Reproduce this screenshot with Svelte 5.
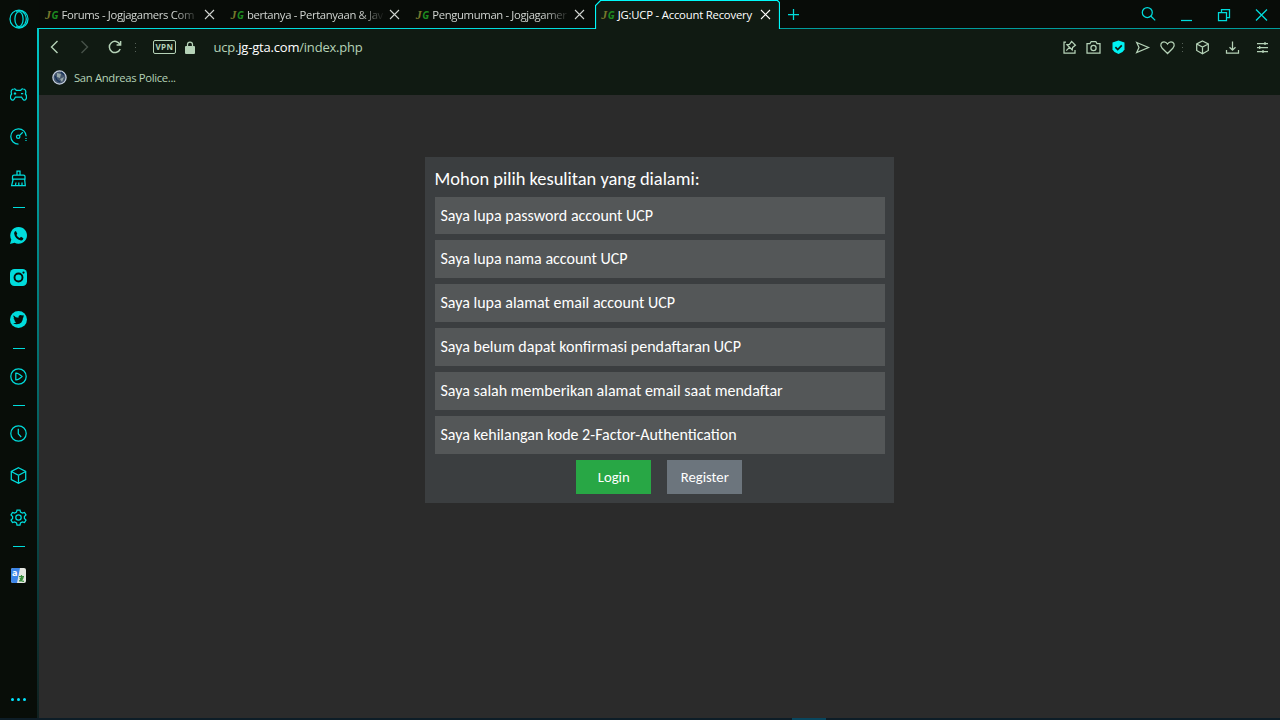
<script>
  const tabs = [
    { title: "Forums - Jogjagamers Com", active: false },
    { title: "bertanya - Pertanyaan & Jav", active: false },
    { title: "Pengumuman - Jogjagamer", active: false },
    { title: "JG:UCP - Account Recovery", active: true },
  ];

  const cube =
    '<path d="M8.5 .7 15.7 4.5V12.5L8.5 16.3 1.3 12.5V4.5ZM1.3 4.5 8.5 8.3 15.7 4.5M8.5 8.3V16.3"/>';

  const sidebar = [
    '<path d="M4 2.8Q5.6 2.6 6.2 4.3H10.8Q11.4 2.6 13 2.8C15 2.8 16.6 5 15.4 8 16.6 9.5 16.6 12 15.9 13.2 14.8 15 12.8 14 12.4 12.4L11.5 11H5.5L4.6 12.4C4.2 14 2.2 15 1.1 13.2.4 12 .4 9.5 1.6 8 .4 5 2 2.8 4 2.8Z"/><path d="M5 6.3V8.7M3.8 7.5H6.2M11 7.5H13.2"/>',
    '<path d="M8.5 16.2A7.7 7.7 0 1 1 16.2 8.2M9.4 7.6 12.8 4.2"/><circle cx="8.2" cy="8.7" r="1.7"/><path d="M16 10v1M16 12v1" />',
    '<path d="M7 5V1.2H10V5M4 5.2H13.5Q15 5.2 15 6.5V9H2.5V6.5Q2.5 5.2 4 5.2ZM3.2 9 1.6 15.7H15.3L14.6 9M5.4 15.5 6 12.5M8.8 15.5V12.5M12 15.5V12.5"/>',
    "-",
    '<g stroke="none" fill="currentColor"><path d="M8.6 0A8.4 8.4 0 1 1 4.6 15.8L0 17 1.3 12.5A8.4 8.4 0 0 1 8.6 0Z"/><path fill="#080d08" d="M5.9 3.9 7.3 6.7 6.5 7.9Q7.7 10.2 9.8 11L11 9.8 13.4 11.2Q13 13.7 10.9 13.4 4.9 12.1 4.1 6.3 4.2 4.2 5.9 3.9Z"/></g>',
    '<rect x="0" y="0" width="17" height="17" rx="4.5" stroke="none" fill="currentColor"/><circle cx="8.5" cy="8.5" r="4" stroke="#080d08" stroke-width="1.9"/><circle cx="13.5" cy="3.6" r="1.1" stroke="none" fill="#080d08"/>',
    '<circle cx="8.5" cy="8.5" r="8.5" stroke="none" fill="currentColor"/><path stroke="none" fill="#080d08" d="M3.5 4.2Q5.6 6.8 8.5 6.8 8.2 3.9 10.8 3.9L12.1 4.5 13.8 4 13.1 5.4 14.2 5.4 13 6.8Q12.8 13 6.8 13.2 4.8 13.2 3.1 12.2 5.2 12.2 6.3 11.2 4.6 10.8 4.2 9.5H5.2Q3.6 8.6 3.5 7.1L4.4 7.4Q2.9 5.8 3.5 4.2Z"/>',
    "-",
    '<circle cx="8.5" cy="8.5" r="7.7"/><path d="M5.8 5.2V11.8Q8 12.2 12 8.5 8 4.8 5.8 5.2Z"/>',
    "-",
    '<circle cx="8.5" cy="8.5" r="7.7"/><path d="M8.3 3.8V8.8L11.2 12"/>',
    cube,
    '<path d="M7 1H10L10.5 3.1 12.4 4.1 14.5 3.4 16 6 14.4 7.5V9.5L16 11 14.5 13.6 12.4 12.9 10.5 13.9 10 16H7L6.5 13.9 4.6 12.9 2.5 13.6 1 11 2.6 9.5V7.5L1 6 2.5 3.4 4.6 4.1 6.5 3.1Z"/><circle cx="8.5" cy="8.5" r="2.7"/>',
    "-",
  ];

  const tools = [
    '<path d="M5 3H3V14H14V11M10.6 2.4 14.4 6.2 11.6 8.4 11.2 11 5.9 5.7 8.5 5.3ZM8.4 8.4 5.3 11.6"/>',
    '<path d="M2 4.5H5L6.2 2.5H10.8L12 4.5H15V14H2Z"/><circle cx="8.5" cy="9" r="2.6"/>',
    '<path fill="#00f3f3" stroke="none" d="M8.5 1.5 14.5 3.5V10.5L12.5 13 8.5 15 4.5 13 2.5 10.5V3.5Z"/><path stroke="#101a12" stroke-width="1.7" d="M5.4 8.2 7.7 10.5 11.8 6.3"/>',
    '<path d="M2.7 3.5 14.5 8.5 2.7 13.5 5 8.5Z"/>',
    '<path d="M8.5 14.5 3.2 9.3C.2 6 2.5 2.8 5 2.8Q7.2 2.8 8.5 5 9.8 2.8 12 2.8C14.5 2.8 16.8 6 13.8 9.3Z"/>',
  ];

  const menus = [
    '<path d="M8.5 2 14.3 5V11.5L8.5 14.8 2.7 11.5V5ZM2.7 5 8.5 8 14.3 5M8.5 8V14.8"/>',
    '<path d="M8.5 2.5V11M5.5 8.2 8.5 11.2 11.5 8.2M2.5 11V14H14.5V11"/>',
    '<path d="M3 4.5H14M3 8.5H14M3 12.5H14M11 3V6M5.7 7V10M9 11V14"/>',
  ];

  const windowButtons = [
    '<circle cx="7.3" cy="6.5" r="5"/><path d="M11 10.2 15.2 14.4"/>',
    '<path d="M3 14.5H14"/>',
    '<path d="M3.5 6.5H11.5V14.5H3.5ZM6.5 6.5V3.5H14.5V11.5H11.5"/>',
    '<path d="M3 3.5 14 14.5M14 3.5 3 14.5"/>',
  ];

  const problems = [
    "Saya lupa password account UCP",
    "Saya lupa nama account UCP",
    "Saya lupa alamat email account UCP",
    "Saya belum dapat konfirmasi pendaftaran UCP",
    "Saya salah memberikan alamat email saat mendaftar",
    "Saya kehilangan kode 2-Factor-Authentication",
  ];
</script>

{#snippet icon(body)}
  <svg class="icon" viewBox="0 0 17 17">{@html body}</svg>
{/snippet}

<div class="window">
  <aside>
    <svg class="opera" viewBox="0 0 20 20">
      <circle cx="10" cy="10" r="9" />
      <ellipse cx="10" cy="10" rx="4.1" ry="7.5" />
      <path d="M7.2 2.5Q12.5 0 15.8 5 18.8 10 15.8 15 12.5 20 7.2 17.5" />
    </svg>
    <nav>
      {#each sidebar as item}
        {#if item === "-"}
          <div class="dash"></div>
        {:else}
          <div class="side-item">{@render icon(item)}</div>
        {/if}
      {/each}
      <div class="side-item">
        <svg class="icon" viewBox="0 0 17 17" stroke="none">
          <rect class="flat" x="1" y="1" width="15" height="15" rx="2" fill="#e4e7e2" />
          <path class="flat" d="M3 1H10L7 16H3Q1 16 1 14V3Q1 1 3 1Z" fill="#3d86e8" />
          <text class="glyph" x="2" y="8.5" fill="#fff">a</text>
          <path
            class="kana"
            d="M9 9.5H14M11.5 8V13.5M9 14Q13 13 13 10M10 11Q11 14 14 14.5"
          />
        </svg>
      </div>
    </nav>
    <div class="more"><i></i><i></i><i></i></div>
  </aside>

  <div class="main">
    <header class="tabs">
      {#each tabs as tab}
        <div class="tab" class:active={tab.active}>
          {#if tab.active}
            <svg class="outline" viewBox="0 0 185 29">
              <path class="fill" d="M0 29V6L6 0H183L185 2V29Z" />
              <path d="M.5 29V5.5L5.5.5H182.5L184.5 2.5V29" />
            </svg>
          {/if}
          <span class="favicon"><b>J</b><b>G</b></span>
          <span class="title">{tab.title}</span>
          <svg class="close" viewBox="0 0 11 11"><path d="M1 1 10 10M10 1 1 10" /></svg>
        </div>
      {/each}
      <div class="strip-end">
        <svg class="plus" viewBox="0 0 11 11"><path d="M5.5 0V11M0 5.5H11" /></svg>
        <div class="window-buttons">
          {#each windowButtons as button}
            <div>{@render icon(button)}</div>
          {/each}
        </div>
      </div>
    </header>

    <div class="toolbar">
      <svg class="back" viewBox="0 0 9 14"><path d="M7.5 1 1.5 7 7.5 13" /></svg>
      <svg class="forward" viewBox="0 0 9 14"><path d="M1.5 1 7.5 7 1.5 13" /></svg>
      <svg class="reload" viewBox="0 0 14 14">
        <path d="M12.2 9A5.6 5.6 0 1 1 12 4.5M12.6 1V5H8.6" />
      </svg>
      <div class="dots"><i></i><i></i><i></i></div>
      <span class="vpn">VPN</span>
      <svg class="lock" viewBox="0 0 10 13">
        <path d="M2.5 6V3.5Q2.5 1 5 1 7.5 1 7.5 3.5V6" />
        <rect x="0" y="5" width="10" height="8" rx="1" fill="currentColor" stroke="none" />
      </svg>
      <span class="url">ucp.<b>jg-gta.com</b>/index.php</span>
      <div class="tools">
        {#each tools as tool}
          <div>{@render icon(tool)}</div>
        {/each}
      </div>
      <div class="dots right"><i></i><i></i><i></i></div>
      <div class="menus">
        {#each menus as menu}
          <div>{@render icon(menu)}</div>
        {/each}
      </div>
    </div>

    <div class="bookmarks">
      <svg class="badge" viewBox="0 0 15 15">
        <circle cx="7.5" cy="7.5" r="6.6" fill="#45566d" stroke="#c5cfdf" />
        <path class="flat" d="M5 3 9 4 8 8 5 7ZM8 9 12 7 10 12Z" fill="#95a6a6" />
        <path d="M3 6 5 10 8 12M9 2 12 5" stroke="#16335b" />
      </svg>
      <span>San Andreas Police...</span>
    </div>

    <main>
      <section class="card">
        <h1>Mohon pilih kesulitan yang dialami:</h1>
        {#each problems as problem}
          <div class="problem">{problem}</div>
        {/each}
        <div class="actions">
          <button class="login">Login</button>
          <button class="register">Register</button>
        </div>
      </section>
    </main>
  </div>
  <footer><span></span></footer>
</div>

<style>
  :global(body) {
    margin: 0;
    overflow: hidden;
    background: #080d08;
  }
  .window {
    --cyan: #00dcdc;
    --mint: #b5d2b7;
    --bar: #101a12;
    display: grid;
    grid-template: 718px 2px / 39px 1241px;
    width: 1280px;
    height: 720px;
    font-family: "Open Sans", "Noto Sans", sans-serif;
    font-size: 11.3px;
  }
  svg {
    display: block;
    flex: none;
    fill: none;
    stroke: currentColor;
    stroke-width: 1.25;
  }
  .flat,
  .glyph {
    stroke: none;
  }
  .kana {
    fill: none;
    stroke: #388e3c;
  }
  .icon {
    width: 17px;
    height: 17px;
  }

  aside {
    display: flex;
    flex-direction: column;
    align-items: center;
    box-sizing: border-box;
    padding: 8.5px 2px 0 0;
    color: var(--cyan);
    background:
      linear-gradient(#00c8c8, #008c8c 30%, #075454 65%, #10201f) 37px 28px / 2px 690px no-repeat,
      #080d08;
  }
  .opera {
    width: 20px;
    height: 20px;
  }
  nav {
    padding-top: 45px;
  }
  .side-item {
    display: flex;
    align-items: center;
    justify-content: center;
    width: 37px;
    height: 42px;
  }
  .side-item:last-child {
    padding-top: 1px;
  }
  .dash {
    width: 12px;
    height: 1px;
    margin: 7px auto;
    background: var(--cyan);
  }
  .glyph {
    font: bold 9px "Open Sans", sans-serif;
  }
  .more {
    display: flex;
    gap: 3px;
    margin-top: auto;
    padding-bottom: 17px;
  }
  .more i {
    width: 3px;
    height: 3px;
    border-radius: 50%;
    background: #00e5ff;
  }

  .main {
    display: flex;
    flex-direction: column;
  }
  .tabs {
    display: flex;
    height: 29px;
    background: #080c08;
  }
  .tab {
    position: relative;
    display: flex;
    align-items: center;
    box-sizing: border-box;
    width: 185.4px;
    height: 29px;
    padding: 1px 9.5px 0 6px;
    border-bottom: 1px solid var(--cyan);
    color: #d0d4d0;
  }
  .tab > * {
    position: relative;
  }
  .tab.active {
    width: 185px;
    border-bottom-color: var(--bar);
    color: #fff;
  }
  .tab .outline {
    position: absolute;
    top: 0;
    left: 0;
    width: 185px;
    height: 29px;
    stroke: #00fafa;
    stroke-width: 1.2;
  }
  .outline .fill {
    fill: var(--bar);
    stroke: none;
  }
  .favicon {
    display: flex;
    width: 16.5px;
    font: italic 10px/12px "Liberation Serif", serif;
  }
  .favicon b:first-child {
    width: 6.5px;
    color: #77782c;
    font-size: 12px;
  }
  .favicon b:last-child {
    color: #1e8a20;
    font-family: "Open Sans", sans-serif;
  }
  .title {
    width: 138px;
    line-height: 20px;
    letter-spacing: -0.36px;
    white-space: nowrap;
    mask-image: linear-gradient(90deg, #000 112px, transparent 138px);
  }
  .active .title {
    letter-spacing: -0.2px;
    mask-image: none;
  }
  .close {
    width: 11px;
    height: 11px;
    margin-left: 4px;
    stroke-width: 1.1;
  }
  .strip-end {
    display: flex;
    flex: 1;
    align-items: center;
    justify-content: space-between;
    box-sizing: border-box;
    height: 29px;
    padding-left: 8px;
    border-bottom: 1px solid #009d9d;
    color: var(--cyan);
  }
  .plus {
    width: 11px;
    height: 11px;
  }
  .window-buttons {
    display: flex;
  }
  .window-buttons div {
    display: flex;
    justify-content: center;
    width: 37.5px;
  }

  .toolbar {
    display: flex;
    align-items: center;
    box-sizing: border-box;
    height: 37px;
    padding: 0 3px 1px 11px;
    color: var(--mint);
    background: var(--bar);
  }
  .back,
  .forward {
    width: 9px;
    height: 14px;
    stroke-width: 1.4;
  }
  .forward {
    margin-left: 21px;
    color: #465148;
  }
  .reload {
    width: 14px;
    height: 14px;
    margin-left: 19px;
    stroke-width: 1.5;
  }
  .dots {
    display: flex;
    flex-direction: column;
    gap: 3px;
    margin-left: 13px;
  }
  .dots i {
    width: 1px;
    height: 1px;
    background: #566158;
  }
  .dots.right {
    width: 7.5px;
    margin: 0;
    padding-left: 2px;
    box-sizing: border-box;
  }
  .vpn {
    box-sizing: border-box;
    width: 23px;
    height: 14px;
    margin-left: 17px;
    border: 1px solid var(--mint);
    border-radius: 2px;
    font-size: 8px;
    font-weight: 700;
    line-height: 12px;
    letter-spacing: 0.5px;
    text-align: center;
  }
  .lock {
    width: 10px;
    height: 13px;
    margin-left: 9px;
  }
  .url {
    margin-left: 18.5px;
    font-size: 13px;
    letter-spacing: -0.2px;
  }
  .url b {
    color: #fff;
    font-weight: 400;
  }
  .tools,
  .menus {
    display: flex;
  }
  .tools {
    margin-left: auto;
  }
  .tools div,
  .menus div {
    display: flex;
    justify-content: center;
    width: 24.5px;
  }
  .menus div {
    width: 30px;
  }
  .bookmarks {
    display: flex;
    gap: 7px;
    box-sizing: border-box;
    height: 29px;
    padding: 4px 0 0 13px;
    line-height: 15px;
    letter-spacing: -0.34px;
    color: var(--mint);
    background: var(--bar);
  }
  .badge {
    width: 15px;
    height: 15px;
  }

  main {
    flex: 1;
    padding-top: 62.4px;
    background: #2b2b2b;
  }
  .card {
    box-sizing: border-box;
    width: 469px;
    height: 345.8px;
    margin: 0 auto;
    padding: 0 9.5px;
    color: #fff;
    background: #3b3e40;
    font-family: Carlito, Lato, sans-serif;
  }
  h1 {
    margin: 0;
    padding-top: 2px;
    height: 37.2px;
    font-size: 18.45px;
    font-weight: 400;
    line-height: 39px;
  }
  .problem {
    height: 37.5px;
    margin-bottom: 6.4px;
    padding-left: 6px;
    background: #545758;
    font-size: 16px;
    line-height: 37px;
  }
  .actions {
    display: flex;
    justify-content: center;
    gap: 16px;
    padding-right: 1.5px;
  }
  button {
    width: 75px;
    height: 34px;
    padding: 1px 0 0 1px;
    border: 0;
    color: #fff;
    font: 14.7px Carlito, Lato, sans-serif;
  }
  .login {
    background: #28a745;
  }
  .register {
    background: #6c757d;
  }
  footer {
    grid-column: 1 / 3;
    padding-left: 792px;
    background: #0d1d27;
  }
  footer span {
    display: block;
    width: 34px;
    height: 2px;
    background: #08465e;
  }
</style>
